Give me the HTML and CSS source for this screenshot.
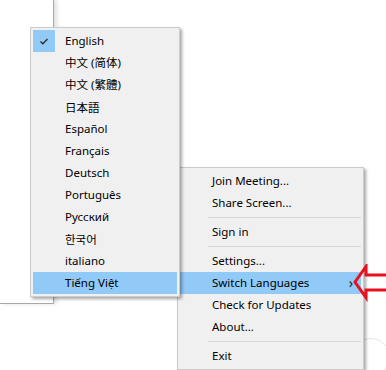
FILE: index.html
```html
<!DOCTYPE html>
<html lang="en">
<head>
    <meta charset="UTF-8">
    <title>Switch Languages</title>
    <link rel="stylesheet" href="styles.css">
</head>
<body>
    <div class="window"></div>

    <!-- tray menu -->
    <div class="menu main-menu">
        <div class="item">Join Meeting...</div>
        <div class="item">Share Screen...</div>
        <div class="sep"></div>
        <div class="item">Sign in</div>
        <div class="sep"></div>
        <div class="item">Settings...</div>
        <div class="item active">Switch Languages<span class="more">&#x203A;</span></div>
        <div class="item">Check for Updates</div>
        <div class="item">About...</div>
        <div class="sep"></div>
        <div class="item">Exit</div>
    </div>

    <!-- language submenu -->
    <div class="menu lang-menu">
        <div class="item checked">
            <span class="check">
                <svg width="22" height="22" viewBox="0 0 22 22"><path d="M7.5 11.5 L9.8 13.8 L14.5 9" fill="none" stroke="#2b2b2b" stroke-width="1.3"/></svg>
            </span>English
        </div>
        <div class="item cjk">中文 (简体)</div>
        <div class="item cjk-tc">中文 (繁體)</div>
        <div class="item cjk-jp">日本語</div>
        <div class="item">Español</div>
        <div class="item">Français</div>
        <div class="item">Deutsch</div>
        <div class="item">Português</div>
        <div class="item">Русский</div>
        <div class="item cjk-kr">한국어</div>
        <div class="item">italiano</div>
        <div class="item active">Tiếng Việt</div>
    </div>

    <svg class="pointer" width="34" height="40" viewBox="0 0 34 40">
        <path d="M3 18 L14 2.5 L14 11 L36 11 L36 26 L14 26 L14 33.5 Z" fill="none" stroke="#e8101c" stroke-width="3" stroke-linejoin="miter"/>
    </svg>

    <div class="round-btn"></div>
</body>
</html>
```

FILE: styles.css
```css
:root {
    --menu-bg: #f0f0f0;
    --menu-border: #cccccc;
    --highlight: #91c9f7;
    --text: #000000;
}
body {
    margin: 0;
    background: #ffffff;
    font-family: "Noto Sans", "Noto Sans CJK SC", sans-serif;
    font-size: 11.5px;
    color: var(--text);
    width: 386px;
    height: 370px;
    overflow: hidden;
    position: relative;
}
.window {
    width: 53px;
    height: 303px;
    border-right: 1px solid #a8a8a8;
    border-bottom: 1px solid #a8a8a8;
    box-shadow: 3px 0 4px rgba(0, 0, 0, 0.12);
}
.menu {
    position: absolute;
    background: var(--menu-bg);
    border: 1px solid var(--menu-border);
    padding: 2px;
    box-shadow: 2px 2px 3px rgba(0, 0, 0, 0.35);
}
.lang-menu {
    left: 30px;
    top: 27px;
    width: 144px;
}
.main-menu {
    left: 177px;
    top: 167px;
    width: 181px;
}
.item {
    height: 22px;
    line-height: 22px;
    padding-left: 32px;
    position: relative;
    white-space: nowrap;
}
.item.active {
    background: var(--highlight);
}
.cjk { font-family: "Noto Sans", "Noto Sans CJK SC", sans-serif; }
.cjk-tc { font-family: "Noto Sans", "Noto Sans CJK TC", sans-serif; }
.cjk-jp { font-family: "Noto Sans CJK JP", sans-serif; }
.cjk-kr { font-family: "Noto Sans CJK KR", sans-serif; }
.check {
    position: absolute;
    left: 0;
    top: 0;
    width: 22px;
    height: 22px;
    background: var(--highlight);
}
.check svg {
    display: block;
}
.more {
    position: absolute;
    right: 8px;
    top: 0;
    font-size: 14px;
    color: #222;
}
.sep {
    height: 7px;
    position: relative;
}
.sep::after {
    content: "";
    position: absolute;
    left: 28px;
    right: 0;
    top: 3px;
    border-top: 1px solid #d7d7d7;
}
.pointer {
    position: absolute;
    left: 352px;
    top: 264px;
}
.round-btn {
    position: absolute;
    left: 352px;
    top: 338px;
    width: 36px;
    height: 36px;
    border-radius: 50%;
    border: 1px solid #e6e6e6;
    z-index: -1;
}
```
